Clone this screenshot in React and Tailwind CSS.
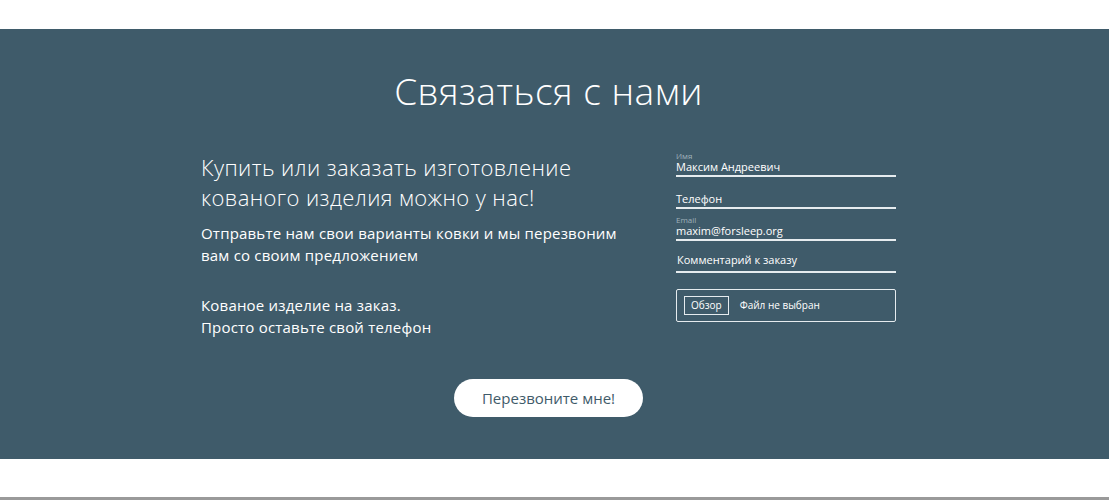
export default function App() {
  return (
    <div className="w-[1109px] h-[500px] bg-white overflow-hidden font-['Open_Sans',sans-serif]">
      <div className="h-[29px] bg-white" />
      <section className="h-[430px] bg-[#3f5b6a]">
        <div className="w-[1097px] flex flex-col items-center">
          <h1 className="mt-[40px] text-[37px] leading-[44px] text-white font-light tracking-[0.5px]">
            Связаться с нами
          </h1>

          <div className="mt-[39px] flex w-[695px] justify-between">
            <div className="w-[420px] text-white">
              <h2 className="text-[22px] leading-[30px] font-light tracking-[0.4px]">
                Купить или заказать изготовление кованого изделия можно у нас!
              </h2>
              <p className="mt-[10px] text-[15px] leading-[22px] font-medium tracking-[0.2px]">
                Отправьте нам свои варианты ковки и мы перезвоним вам со своим предложением
              </p>
              <p className="mt-[28px] text-[15px] leading-[22px] font-medium tracking-[0.2px]">
                Кованое изделие на заказ.
                <br />
                Просто оставьте свой телефон
              </p>
            </div>

            <form className="w-[220px] -mt-[7px] text-white">
              <div className="border-b-2 border-[#e6ecef] h-[32px] flex flex-col justify-end pb-[1px]">
                <span className="text-[8px] leading-[9px] text-[#9fb1bb]">Имя</span>
                <span className="text-[11px] leading-[14px] font-medium">Максим Андреевич</span>
              </div>
              <div className="border-b-2 border-[#e6ecef] h-[32px] flex flex-col justify-end pb-[1px]">
                <span className="text-[11px] leading-[14px] font-medium">Телефон</span>
              </div>
              <div className="border-b-2 border-[#e6ecef] h-[32px] flex flex-col justify-end pb-[1px]">
                <span className="text-[8px] leading-[9px] text-[#9fb1bb]">Email</span>
                <span className="text-[11px] leading-[14px] font-medium">maxim@forsleep.org</span>
              </div>
              <div className="border-b-2 border-[#e6ecef] h-[32px] flex flex-col justify-end pb-[4px] pl-[1px]">
                <span className="text-[11px] leading-[14px] font-medium">Комментарий к заказу</span>
              </div>

              <div className="mt-[16px] h-[33px] border border-[#e6ecef] rounded-[2px] flex items-center px-[7px] gap-[11px]">
                <span className="border border-[#e6ecef] h-[19px] px-[6px] flex items-center text-[10px] font-medium">
                  Обзор
                </span>
                <span className="text-[10px] font-medium">Файл не выбран</span>
              </div>
            </form>
          </div>

          <button className="mt-[41px] w-[189px] h-[38px] rounded-full bg-white text-[#3f5b6a] text-[15px] font-medium">
            Перезвоните мне!
          </button>
        </div>
      </section>
      <div className="h-[38px] bg-white" />
      <div className="h-[3px] bg-[#9a9a9a]" />
    </div>
  );
}
